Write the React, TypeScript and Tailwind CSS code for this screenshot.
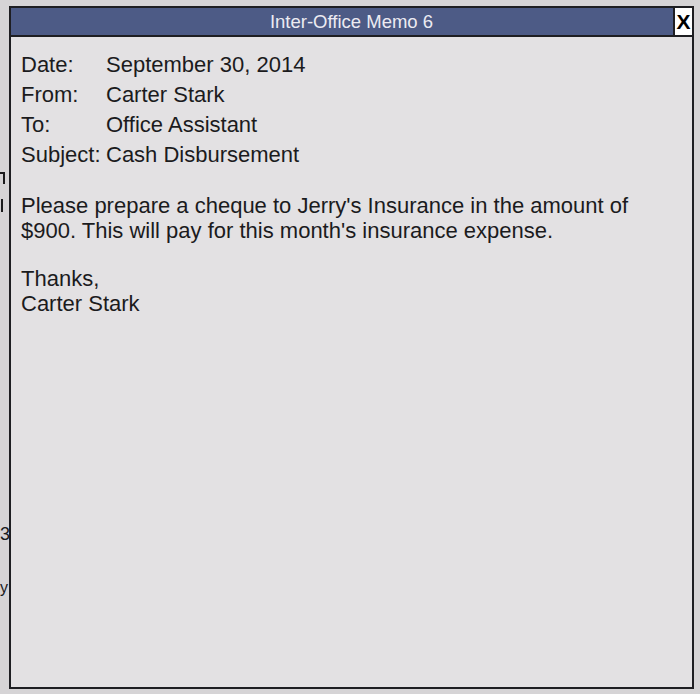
import React from "react";

export default function App() {
  const header = [
    { label: "Date:", value: "September 30, 2014" },
    { label: "From:", value: "Carter Stark" },
    { label: "To:", value: "Office Assistant" },
    { label: "Subject:", value: "Cash Disbursement" },
  ];

  return (
    <div
      className="relative w-[700px] h-[694px] overflow-hidden bg-[#d6d4d6] pt-[6px] pl-[9px] text-[#1b1b1d]"
      style={{ fontFamily: '"Liberation Sans", Arial, sans-serif' }}
    >
      {/* bits of the page behind the memo window */}
      <div className="absolute left-0 top-[172px] w-[5px] h-[12px] border-t-2 border-r-2 border-[#1b1b1d]" />
      <div className="absolute left-[1px] top-[199px] w-[2px] h-[13px] bg-[#1b1b1d]" />
      <div className="absolute left-0 top-[525px] text-[18px] leading-none">3</div>
      <div className="absolute left-0 top-[580px] text-[16px] leading-none">y</div>

      {/* Memo window */}
      <div className="relative z-10 w-[685px] h-[683px] border-2 border-[#1e1e22] bg-[#e3e1e3] flex flex-col">
        <div className="flex h-[29px] border-b-2 border-[#1e1e22]">
          <div className="flex-1 bg-[#4d5b86] flex items-center justify-center pl-[19px] text-[18.5px] text-[#ecebf2]">
            Inter-Office Memo 6
          </div>
          <div className="w-[19px] bg-white border-l-2 border-[#1e1e22] flex items-center justify-center">
            <span className="text-[21px] font-bold leading-none text-black">X</span>
          </div>
        </div>

        <div className="pl-[10px] pt-[13px] text-[22px]">
          <div className="grid grid-cols-[85px_1fr] leading-[30px]">
            {header.map((row) => (
              <React.Fragment key={row.label}>
                <div className="whitespace-nowrap">{row.label}</div>
                <div>{row.value}</div>
              </React.Fragment>
            ))}
          </div>

          <p className="mt-[23px] leading-[25px]">
            Please prepare a cheque to Jerry's Insurance in the amount of
            <br />
            $900. This will pay for this month's insurance expense.
          </p>

          <p className="mt-[23px] leading-[25px]">
            Thanks,
            <br />
            Carter Stark
          </p>
        </div>
      </div>
    </div>
  );
}
